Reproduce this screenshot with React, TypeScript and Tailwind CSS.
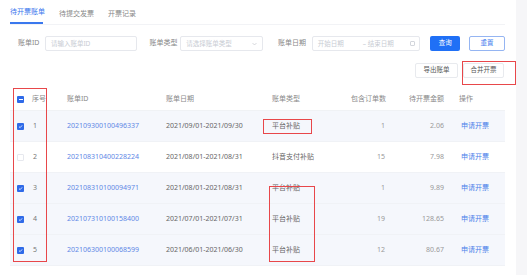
import React from "react";

type Row = {
  no: number;
  id: string;
  date: string;
  type: string;
  count: number;
  amount: string;
  checked: boolean;
};

const ROWS: Row[] = [
  { no: 1, id: "202109300100496337", date: "2021/09/01-2021/09/30", type: "平台补贴", count: 1, amount: "2.06", checked: true },
  { no: 2, id: "202108310400228224", date: "2021/08/01-2021/08/31", type: "抖音支付补贴", count: 15, amount: "7.98", checked: false },
  { no: 3, id: "202108310100094971", date: "2021/08/01-2021/08/31", type: "平台补贴", count: 1, amount: "9.89", checked: true },
  { no: 4, id: "202107310100158400", date: "2021/07/01-2021/07/31", type: "平台补贴", count: 19, amount: "128.65", checked: true },
  { no: 5, id: "202106300100068599", date: "2021/06/01-2021/06/30", type: "平台补贴", count: 12, amount: "80.67", checked: true },
];

const COLS = "grid grid-cols-[22px_35px_99px_104px_75px_45px_55px_60px]";

function Checkbox({ checked, partial }: { checked?: boolean; partial?: boolean }) {
  if (!checked && !partial) {
    return <span className="block w-[7px] h-[7px] rounded-[1px] border border-[#e6e8ee] bg-white" />;
  }
  return (
    <span className="flex w-[7px] h-[7px] rounded-[1px] bg-[#2f6ae8] items-center justify-center">
      {partial ? (
        <span className="block w-[4px] h-[1px] bg-white" />
      ) : (
        <svg width="5" height="5" viewBox="0 0 10 10">
          <path d="M2 5.2 L4.2 7.3 L8.2 2.8" stroke="white" strokeWidth="1.6" fill="none" />
        </svg>
      )}
    </span>
  );
}

export default function App() {
  return (
    <div
      className="relative flex w-[527px] h-[275px] bg-white text-[7px] text-[#777]"
      style={{ fontFamily: '"Noto Sans", "Noto Sans CJK SC", sans-serif' }}
    >
      <div className="w-[516px] pl-[10px] pr-[11px] flex flex-col">
        {/* Tabs */}
        <div className="h-[25px] flex gap-[14px] border-b border-[#f2f3f6]">
          <div className="flex flex-col justify-end">
            <span className="text-[#3a78ee] leading-none mb-[7px]">待开票账单</span>
            <span className="block h-[2px] w-[33px] bg-[#3a78ee]" />
          </div>
          <div className="pt-[10px] leading-none text-[#888]">待提交发票</div>
          <div className="pt-[10px] leading-none text-[#888]">开票记录</div>
        </div>

        {/* Filters */}
        <div className="mt-[11px] h-[15px] flex items-center text-[#888]">
          <span className="ml-[8px] w-[27px]">账单ID</span>
          <div className="w-[93px] h-[15px] border border-[#e6e8ed] rounded-[2px] flex items-center pl-[5px] text-[#c8ccd3] text-[6.5px]">
            请输入账单ID
          </div>
          <span className="ml-[12px] w-[31px]">账单类型</span>
          <div className="w-[83px] h-[15px] border border-[#e6e8ed] rounded-[2px] flex items-center justify-between px-[5px] text-[#c8ccd3] text-[6.5px]">
            <span>请选择账单类型</span>
            <svg width="5" height="4" viewBox="0 0 10 6">
              <path d="M1 1 L5 5 L9 1" stroke="#bcc0c8" strokeWidth="1.2" fill="none" />
            </svg>
          </div>
          <span className="ml-[15px] w-[34px]">账单日期</span>
          <div className="w-[109px] h-[15px] border border-[#e6e8ed] rounded-[2px] flex items-center pl-[5px] pr-[4px] text-[#c8ccd3] text-[6.5px]">
            <span className="w-[45px]">开始日期</span>
            <span>– 结束日期</span>
            <span className="ml-auto block w-[5px] h-[5px] border border-[#d3d6dc] rounded-[1px]" />
          </div>
          <button className="ml-[10px] w-[30px] h-[15px] rounded-[2px] bg-[#2070f6] text-white text-[6.5px] leading-none">
            查询
          </button>
          <button className="ml-[9px] w-[36px] h-[15px] rounded-[2px] border border-[#95b5f2] text-[#3a78ee] text-[6.5px] leading-none">
            重置
          </button>
        </div>

        {/* Actions */}
        <div className="mt-[12px] h-[15px] flex justify-end gap-[5px] pr-[1px]">
          <button className="w-[43px] h-[15px] rounded-[2px] border border-[#e8eaee] text-[6.5px] text-[#555] leading-none">
            导出账单
          </button>
          <button className="w-[41px] h-[15px] rounded-[2px] border border-[#e8eaee] text-[6.5px] text-[#555] leading-none">
            合并开票
          </button>
        </div>

        {/* Table */}
        <div className="mt-[10px]">
          <div className={`${COLS} h-[23px] items-center text-[#8a8a8a] border-b border-[#f0f2f5]`}>
            <div className="pl-[7px]">
              <Checkbox partial />
            </div>
            <div>序号</div>
            <div>账单ID</div>
            <div>账单日期</div>
            <div className="pl-[2px]">账单类型</div>
            <div className="pl-[6px]">包含订单数</div>
            <div className="text-right pr-[1px]">待开票金额</div>
            <div className="pl-[14px]">操作</div>
          </div>
          {ROWS.map((r) => (
            <div
              key={r.no}
              className={`${COLS} h-[31px] items-center border-b border-[#f0f2f6] ${r.checked ? "bg-[#f5f7fc]" : "bg-white"}`}
            >
              <div className="pl-[7px]">
                <Checkbox checked={r.checked} />
              </div>
              <div className="pl-[1px] text-[#777]">{r.no}</div>
              <div className="text-[#6088e6]">{r.id}</div>
              <div className="text-[#666]">{r.date}</div>
              <div className="pl-[2px] text-[#666]">{r.type}</div>
              <div className="text-right pr-[5px] text-[#999]">{r.count}</div>
              <div className="text-right pr-[1px] text-[#999]">{r.amount}</div>
              <div className="pl-[16px] text-[#4a80ea]">申请开票</div>
            </div>
          ))}
        </div>
      </div>
      <div className="flex-1 bg-[#f6f6f8]" />

      {/* annotation boxes */}
      <div className="absolute left-[13px] top-[88px] w-[34px] h-[174px] border-[1.5px] border-[#e8474a]" />
      <div className="absolute left-[263px] top-[119px] w-[49px] h-[15px] border-[1.5px] border-[#e8474a]" />
      <div className="absolute left-[269px] top-[186px] w-[46px] h-[76px] border-[1.5px] border-[#e8474a]" />
      <div className="absolute left-[462px] top-[61px] w-[54px] h-[24px] border-[1.5px] border-[#e8474a]" />
    </div>
  );
}
